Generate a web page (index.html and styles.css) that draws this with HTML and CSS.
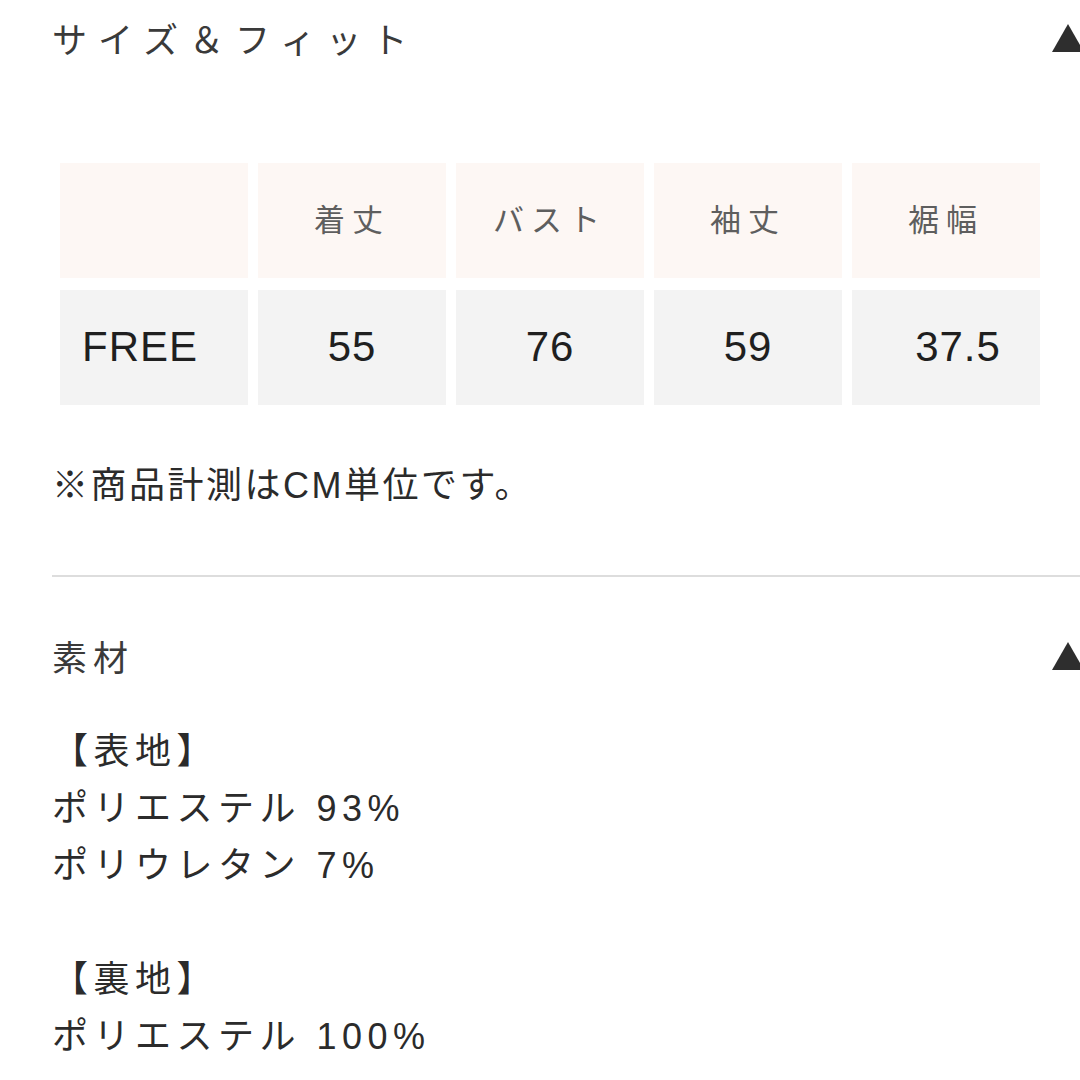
FILE: index.html
```html
<!DOCTYPE html>
<html lang="ja">
<head>
<meta charset="utf-8">
<title>サイズ＆フィット</title>
<link rel="stylesheet" href="styles.css">
</head>
<body>
<div class="page">
  <div class="section-head head-size">
    <span class="section-title wide">サイズ＆フィット</span>
    <svg class="tri" width="32" height="28" viewBox="0 0 32 28"><polygon points="16,0 32,28 0,28" fill="#2e2e2e"/></svg>
  </div>

  <div class="size-table">
    <div class="th"></div>
    <div class="th"><span>着丈</span></div>
    <div class="th"><span>バスト</span></div>
    <div class="th"><span>袖丈</span></div>
    <div class="th"><span>裾幅</span></div>
    <div class="td td-label">FREE</div>
    <div class="td">55</div>
    <div class="td">76</div>
    <div class="td">59</div>
    <div class="td td-last">37.5</div>
  </div>

  <p class="note">※商品計測はCM単位です。</p>

  <div class="divider"></div>

  <div class="section-head head-material">
    <span class="section-title mat">素材</span>
    <svg class="tri" width="32" height="28" viewBox="0 0 32 28"><polygon points="16,0 32,28 0,28" fill="#2e2e2e"/></svg>
  </div>

  <div class="materials">
    <div class="mline">【表地】</div>
    <div class="mline">ポリエステル 93%</div>
    <div class="mline">ポリウレタン 7%</div>
    <div class="mline blank"></div>
    <div class="mline">【裏地】</div>
    <div class="mline">ポリエステル 100%</div>
  </div>
</div>
</body>
</html>
```

FILE: styles.css
```css
html, body {
  margin: 0;
  padding: 0;
  background: #ffffff;
  overflow: hidden;
}
body {
  width: 1080px;
  height: 1080px;
  font-family: "Noto Sans CJK JP", "Noto Sans", sans-serif;
  font-weight: 400;
  color: #2b2b2b;
}
.page {
  padding-left: 52px;
}
.section-head {
  display: flex;
  align-items: center;
  justify-content: space-between;
  height: 44px;
  margin-right: -4px;
}
.head-size {
  padding-top: 16px;
}
.section-title {
  font-size: 35px;
  line-height: 44px;
  color: #3a3a3a;
}
.section-title.wide {
  letter-spacing: 11px;
}
.section-title.mat {
  letter-spacing: 6px;
}
.tri {
  display: block;
  flex: none;
}
.size-table {
  margin-top: 103px;
  margin-left: 8px;
  display: grid;
  grid-template-columns: repeat(5, 188px);
  grid-template-rows: 115px 115px;
  column-gap: 10px;
  row-gap: 12px;
}
.th {
  background: #fdf7f4;
  display: flex;
  align-items: center;
  justify-content: center;
  font-size: 31px;
  color: #5e5e5e;
  letter-spacing: 7px;
  padding-bottom: 6px;
}
.td {
  background: #f3f3f3;
  display: flex;
  align-items: center;
  justify-content: center;
  font-family: "Liberation Sans", Arial, sans-serif;
  font-size: 42px;
  color: #1f1f1f;
  letter-spacing: 1px;
  padding-bottom: 2px;
}
.td-label {
  justify-content: flex-start;
  padding-left: 22px;
}
.td-last {
  padding-left: 24px;
}
.note {
  margin: 56px 0 0 0;
  font-family: "Liberation Sans", "Noto Sans CJK JP", sans-serif;
  font-size: 36px;
  line-height: 50px;
  letter-spacing: 2.5px;
  color: #2b2b2b;
}
.divider {
  margin-top: 64px;
  height: 2px;
  background: #dddddd;
}
.head-material {
  margin-top: 57px;
}
.materials {
  margin-top: 45px;
  font-family: "Liberation Sans", "Noto Sans CJK JP", sans-serif;
}
.mline {
  font-size: 36px;
  line-height: 57px;
  height: 57px;
  letter-spacing: 5.5px;
  color: #2b2b2b;
}
```
